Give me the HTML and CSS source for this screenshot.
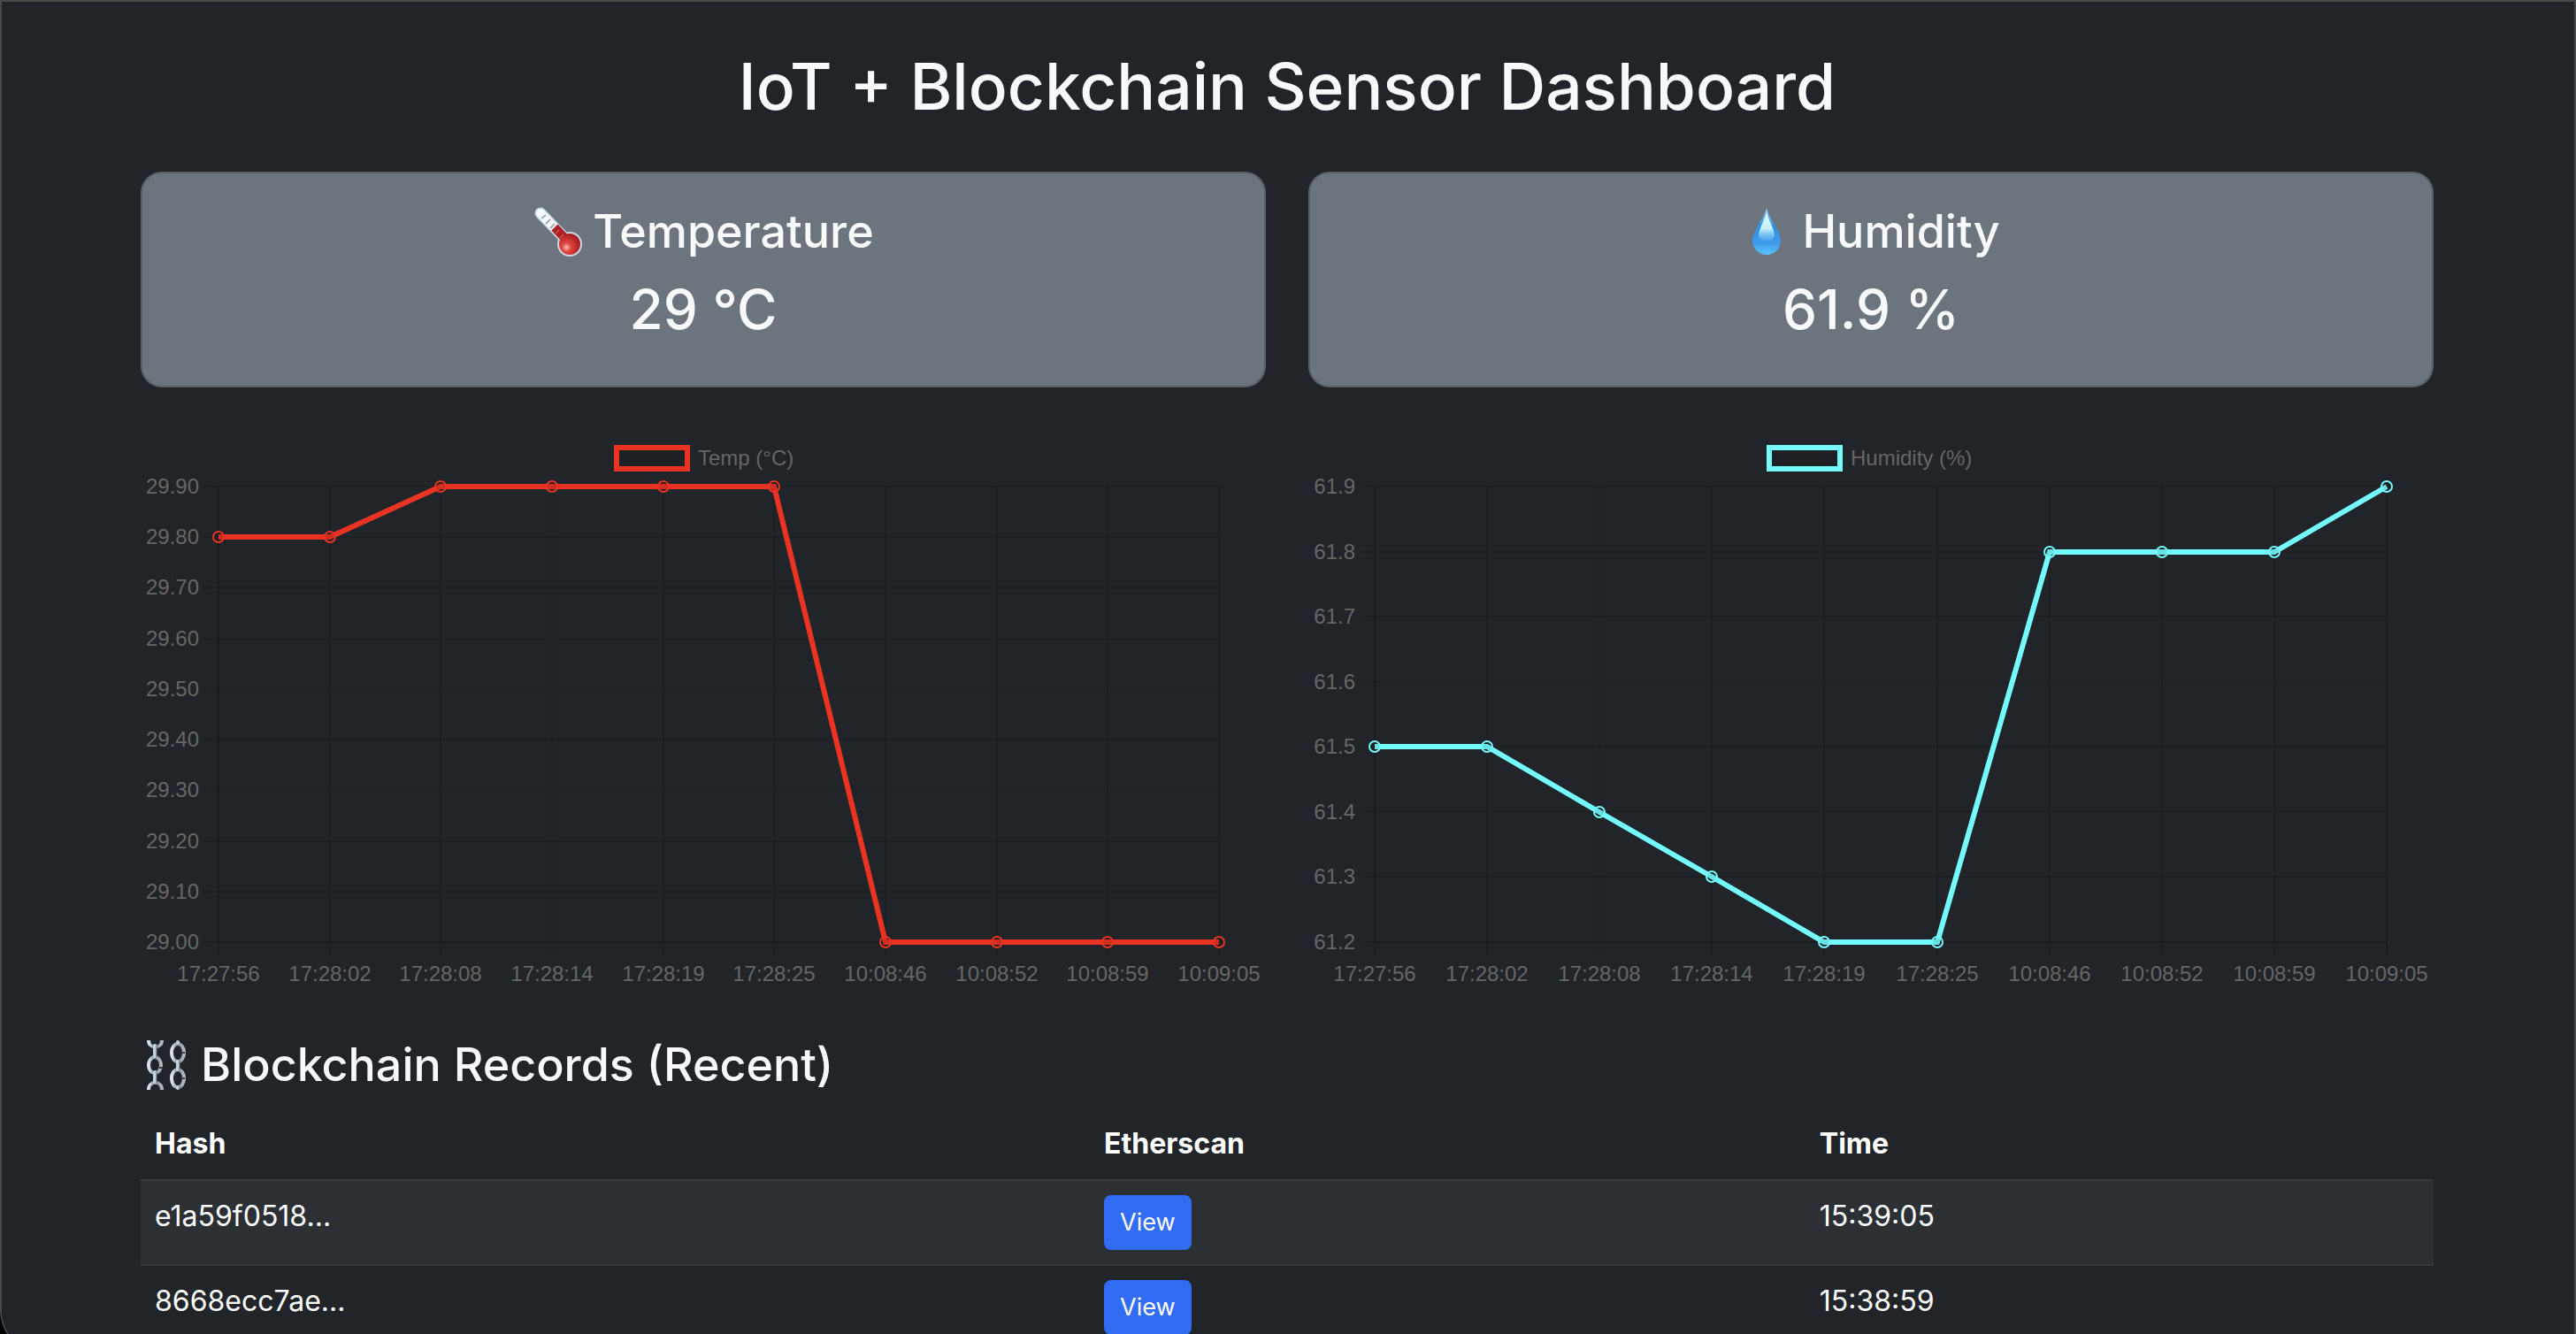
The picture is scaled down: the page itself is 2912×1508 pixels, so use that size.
FILE: index.html
```html
<!DOCTYPE html>
<html lang="en">
<head>
<meta charset="utf-8">
<title>IoT + Blockchain Sensor Dashboard</title>
<link rel="stylesheet" href="styles.css">
</head>
<body>
<div class="window">
  <main class="container">
    <h1 class="title">IoT + Blockchain Sensor Dashboard</h1>

    <section class="row">
      <article class="card">
        <h2 class="heading">
          <svg class="emoji" viewBox="0 0 56 56" aria-hidden="true">
            <defs>
              <radialGradient id="bulb" cx=".35" cy=".65" r=".7"><stop offset="0" stop-color="#ffc2b8"/><stop offset=".3" stop-color="#e2453f"/><stop offset="1" stop-color="#a0161c"/></radialGradient>
            </defs>
            <path d="M9 7 L40 39" stroke="#bdd8e6" stroke-width="13" stroke-linecap="round"/>
            <circle cx="42" cy="42" r="14" fill="#c6dbe6"/>
            <path d="M9 7 L38 37" stroke="#f6fafc" stroke-width="10" stroke-linecap="round"/>
            <path d="M25 23 L40 39" stroke="#b01f24" stroke-width="10"/>
            <path d="M10 13l5-4M15 19l5-5M20 24l5-5" stroke="#a5abaf" stroke-width="2"/>
            <path d="M26 30l4-4M31 35l4-4" stroke="#d98a88" stroke-width="1"/>
            <circle cx="42" cy="42" r="12" fill="url(#bulb)"/>
          </svg>
          <span>Temperature</span>
        </h2>
        <p class="value">29 °C</p>
      </article>
      <article class="card">
        <h2 class="heading">
          <svg class="emoji" viewBox="0 0 56 56" aria-hidden="true">
            <defs>
              <linearGradient id="drop" x1="0" y1="0" x2="0" y2="1"><stop offset="0" stop-color="#8fd0f5"/><stop offset=".4" stop-color="#2f8fe0"/><stop offset=".75" stop-color="#3f9aec"/><stop offset="1" stop-color="#5cc3fb"/></linearGradient>
              <linearGradient id="shine" x1="0" y1="0" x2="0" y2="1"><stop offset="0" stop-color="#e8fbff"/><stop offset=".6" stop-color="#c4f1fe"/><stop offset="1" stop-color="#6cbcf6" stop-opacity=".4"/></linearGradient>
            </defs>
            <path d="M28 1C26 12 12 27 12 38a16 16 0 0 0 32 0C44 27 30 12 28 1Z" fill="url(#drop)"/>
            <path d="M28 4C27 14 19 24 19 33q1 5 9 5t9-5C37 24 29 14 28 4Z" fill="url(#shine)"/>
          </svg>
          <span>Humidity</span>
        </h2>
        <p class="value">61.9 %</p>
      </article>
    </section>

    <section class="row">
      <svg class="chart chart-temp" id="tempChart" viewBox="0 0 1272 636" role="img" aria-label="Temperature over time"></svg>
      <svg class="chart chart-humidity" id="humidityChart" viewBox="0 0 1272 636" role="img" aria-label="Humidity over time"></svg>
    </section>

    <section>
      <h2 class="heading">
        <svg class="emoji" viewBox="0 0 56 56" fill="none" aria-hidden="true">
          <defs>
            <linearGradient id="steel" x1="0" y1="0" x2="1" y2="0"><stop offset="0" stop-color="#dfe8ef"/><stop offset=".5" stop-color="#7f8e9c"/><stop offset="1" stop-color="#b4babf"/></linearGradient>
          </defs>
          <g stroke="url(#steel)" stroke-width="4">
            <path d="M9 0C9 10 24 10 24 0"/>
            <ellipse cx="16" cy="28" rx="7" ry="9"/>
            <path d="M9 56C9 45 24 45 24 56"/>
            <ellipse cx="42" cy="14" rx="7" ry="10"/>
            <ellipse cx="42" cy="43" rx="7" ry="10"/>
          </g>
          <g stroke="#c3d1de" stroke-width="4" stroke-linecap="round">
            <path d="M16 6v12M16 36v11M42 24v9M42 2v1M42 53v1"/>
          </g>
          <path d="M18 6v13M18 36v12M44 23v11M44 52v4" stroke="#5f666c" stroke-width="1"/>
          <path d="M21 31h4M46 14h4M46 43h4" stroke="#4a4038" stroke-width="2"/>
        </svg>
        <span>Blockchain Records (Recent)</span>
      </h2>
      <table class="records">
        <thead>
          <tr><th scope="col" class="col-hash">Hash</th><th scope="col" class="col-link">Etherscan</th><th scope="col">Time</th></tr>
        </thead>
        <tbody>
          <tr><td>e1a59f0518...</td><td><a class="button" href="#e1a59f0518">View</a></td><td>15:39:05</td></tr>
          <tr><td>8668ecc7ae...</td><td><a class="button" href="#8668ecc7ae">View</a></td><td>15:38:59</td></tr>
        </tbody>
      </table>
    </section>
  </main>
</div>
<script src="charts.js"></script>
</body>
</html>
```
FILE: styles.css
```css
* {
  box-sizing: border-box;
}

html {
  height: 100%;
  overflow: hidden;
}

body {
  margin: 0;
  background: #000;
  color: #f8f9fa;
  font-family: Inter, "Liberation Sans", sans-serif;
  font-size: 32px;
  line-height: 48px;
}

/* browser window frame, its rounded bottom edge just under the fold */
.window {
  height: calc(100vh + 24px);
  overflow-y: auto;
  scrollbar-width: none;
  background: #212529;
  border: 2px solid #47494b;
  border-bottom-left-radius: 52px;
}

.container {
  max-width: 2642px;
  margin: 0 auto;
  padding: 48px 26px 48px 24px;
}

.title {
  margin: 0 0 48px;
  font-size: 73px;
  font-weight: 500;
  line-height: 96px;
  text-align: center;
}

.row {
  display: grid;
  grid-template-columns: 1fr 1fr;
  gap: 48px;
  margin-bottom: 48px;
}

.card {
  padding: 32px;
  background: #6c757d;
  border: 2px solid #595f65;
  border-radius: 24px;
}

.card .heading {
  justify-content: center;
}

.heading {
  display: flex;
  align-items: center;
  gap: 12px;
  margin: 0 0 16px;
  font-size: 52px;
  font-weight: 500;
  line-height: 67px;
}

.emoji {
  width: 56px;
  height: 56px;
}

.value {
  margin: 0 0 16px;
  font-size: 62px;
  font-weight: 500;
  line-height: 77px;
  text-align: center;
}

.chart {
  display: block;
  width: 100%;
  font-family: "Liberation Sans", Arial, sans-serif;
  font-size: 24px;
  fill: #666;
}

.chart-temp {
  --series: #eb3323;
}

.chart-humidity {
  --series: #73fbfd;
}

.grid {
  stroke: rgba(0, 0, 0, 0.1);
  stroke-width: 2;
}

.series {
  fill: none;
  stroke: var(--series);
  stroke-width: 6;
}

.point {
  fill: rgba(0, 0, 0, 0.1);
  stroke: var(--series);
  stroke-width: 2;
}

.swatch {
  fill: rgba(0, 0, 0, 0.1);
  stroke: var(--series);
  stroke-width: 6;
}

.tick-x {
  text-anchor: middle;
}

.tick-y {
  text-anchor: end;
}

.records {
  width: 100%;
  border-collapse: separate;
  border-spacing: 0;
  table-layout: fixed;
  color: #fff;
}

.records th,
.records td {
  padding: 16px;
  border-bottom: 2px solid #373b3e;
  text-align: left;
  vertical-align: top;
}

.records th {
  font-weight: 700;
}

.records tbody tr:nth-child(odd) {
  background: #2c3034;
}

.col-hash {
  width: 41.4%;
}

.col-link {
  width: 31.2%;
}

.button {
  display: block;
  width: fit-content;
  padding: 8px 16px;
  background: #316cf4;
  border: 2px solid #316cf4;
  border-radius: 8px;
  color: #fff;
  font-size: 27px;
  line-height: 42px;
  text-decoration: none;
}
```
FILE: charts.js
```js
const times = ["17:27:56", "17:28:02", "17:28:08", "17:28:14", "17:28:19",
  "17:28:25", "10:08:46", "10:08:52", "10:08:59", "10:09:05"];

function drawChart(id, { label, legendX, left, min, max, digits, values }) {
  const right = 1219, top = 64, bottom = 579;
  const steps = Math.round((max - min) * 10);
  const x = i => Math.round(left + (right - left) * i / (times.length - 1));
  const y = v => Math.round(bottom - (bottom - top) * (v - min) / (max - min));
  const line = (x1, y1, x2, y2) =>
    `<line class="grid" x1="${x1}" y1="${y1}" x2="${x2}" y2="${y2}"/>`;
  let out = `<rect class="swatch" x="${legendX}" y="20" width="80" height="24"/>` +
    `<text x="${legendX + 92}" y="40">${label}</text>`;

  times.forEach((time, i) => {
    out += line(x(i), top, x(i), bottom + 16) +
      `<text class="tick-x" x="${x(i)}" y="623">${time}</text>`;
  });
  for (let s = 0; s <= steps; s++) {
    const v = min + s / 10;
    out += line(left - 16, y(v), right, y(v)) +
      `<text class="tick-y" x="${left - 22}" y="${y(v) + 8}">${v.toFixed(digits)}</text>`;
  }
  out += line(left, top, left, bottom) + line(left, bottom, right, bottom);

  out += `<polyline class="series" points="${values.map((v, i) => x(i) + "," + y(v)).join(" ")}"/>`;
  values.forEach((v, i) => {
    out += `<circle class="point" cx="${x(i)}" cy="${y(v)}" r="6"/>`;
  });
  document.getElementById(id).innerHTML = out;
}

drawChart("tempChart", {
  label: "Temp (°C)", legendX: 538, left: 88, min: 29, max: 29.9, digits: 2,
  values: [29.8, 29.8, 29.9, 29.9, 29.9, 29.9, 29, 29, 29, 29]
});
drawChart("humidityChart", {
  label: "Humidity (%)", legendX: 521, left: 75, min: 61.2, max: 61.9, digits: 1,
  values: [61.5, 61.5, 61.4, 61.3, 61.2, 61.2, 61.8, 61.8, 61.8, 61.9]
});
```
